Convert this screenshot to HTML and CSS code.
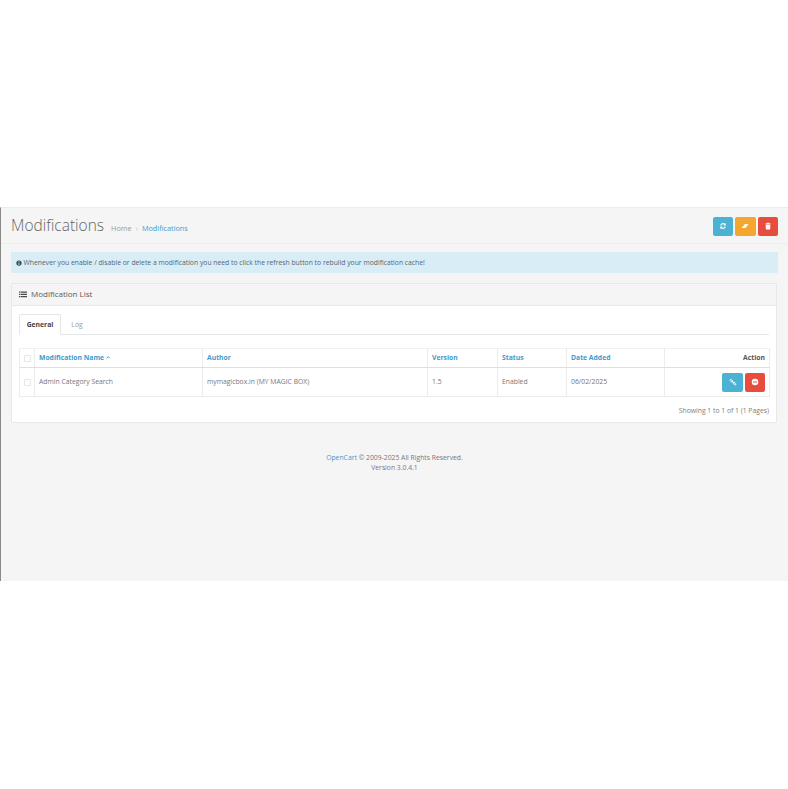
FILE: index.html
```html
<!DOCTYPE html>
<html lang="en">
<head>
<meta charset="utf-8">
<title>Modifications</title>
<link rel="stylesheet" href="styles.css">
</head>
<body>
<main class="app">
  <header class="page-header">
    <div class="heading">
      <h1>Modifications</h1>
      <nav class="crumbs"><span>Home</span><span class="sep">›</span><a href="#">Modifications</a></nav>
    </div>
    <div class="btn-row">
      <button class="btn info" aria-label="Refresh"><svg viewBox="0 0 16 16"><path d="M2.500 7a5.500 5.500 0 0 1 9.300-3.300L13.500 2v5h-5l1.800-1.800A3.400 3.400 0 0 0 4.700 7zM13.500 9a5.500 5.500 0 0 1-9.300 3.300L2.500 14V9h5l-1.800 1.800A3.400 3.400 0 0 0 11.300 9z"/></svg></button>
      <button class="btn warn" aria-label="Clear"><svg viewBox="0 0 16 16"><path d="M1 12 8 4h7L9 12z"/></svg></button>
      <button class="btn danger" aria-label="Delete"><svg viewBox="0 0 16 16"><path d="M6 1.500h4l.7 1.500H13.500v1.700h-11V3h2.800zM3.500 5.500h9v8a1.500 1.500 0 0 1-1.500 1.500H5a1.500 1.500 0 0 1-1.500-1.500z"/></svg></button>
    </div>
  </header>

  <div class="alert"><svg class="alert-icon" viewBox="0 0 16 16"><path fill-rule="evenodd" d="M8 1a7 7 0 1 1 0 14A7 7 0 0 1 8 1zM6.800 3.500v2.200h2.400V3.500zM6 7v1.500h1V11H6v1.500h4V11H9V7z"/></svg><span>Whenever you enable / disable or delete a modification you need to click the refresh button to rebuild your modification cache!</span></div>

  <section class="panel">
    <div class="panel-heading"><svg class="list-icon" viewBox="0 0 16 14"><path d="M0 1h3v2.500H0zM4 1h12v2.500H4zM0 5.500h3V8H0zM4 5.500h12V8H4zM0 10h3v2.500H0zM4 10h12v2.500H4z"/></svg><span>Modification List</span></div>
    <div class="panel-body">
      <div class="tabs">
        <a class="tab active" href="#">General</a>
        <a class="tab" href="#">Log</a>
      </div>
      <table>
        <colgroup>
          <col class="c-check"><col class="c-name"><col class="c-author"><col class="c-version"><col class="c-status"><col class="c-date"><col class="c-action">
        </colgroup>
        <thead>
          <tr>
            <th><span class="check"></span></th>
            <th><a href="#">Modification Name <svg class="caret" viewBox="0 0 10 6"><path d="M1 5l4-4 4 4"/></svg></a></th>
            <th><a href="#">Author</a></th>
            <th><a href="#">Version</a></th>
            <th><a href="#">Status</a></th>
            <th><a href="#">Date Added</a></th>
            <th class="right">Action</th>
          </tr>
        </thead>
        <tbody>
          <tr>
            <td><span class="check"></span></td>
            <td>Admin Category Search</td>
            <td>mymagicbox.in (MY MAGIC BOX)</td>
            <td>1.5</td>
            <td>Enabled</td>
            <td>06/02/2025</td>
            <td class="right">
              <div class="row-actions">
                <button class="btn info" aria-label="Link"><svg viewBox="0 0 16 16"><path class="link-stroke" d="M2.500 3.500a1.500 1.500 0 0 1 2.100-.6l2.500 2.500a1.500 1.500 0 0 1-.6 2.100 1.500 1.500 0 0 1-2.100.1L2.400 5.600a1.500 1.500 0 0 1 .1-2.100zM8.500 9a1.500 1.500 0 0 1 2.100-.6l2.900 2.900a1.500 1.500 0 0 1-.1 2.100 1.500 1.500 0 0 1-2.100.1L8.400 11.100A1.500 1.500 0 0 1 8.500 9zM5.500 5.500l5 5"/></svg></button>
                <button class="btn danger narrow" aria-label="Disable"><svg viewBox="0 0 16 16"><path fill-rule="evenodd" d="M8 1.500a6.500 6.500 0 1 1 0 13 6.500 6.500 0 0 1 0-13zM4 6.800v2.400h8V6.800z"/></svg></button>
              </div>
            </td>
          </tr>
        </tbody>
      </table>
      <p class="results">Showing 1 to 1 of 1 (1 Pages)</p>
    </div>
  </section>

  <footer class="footer"><a href="#">OpenCart</a> © 2009-2025 All Rights Reserved.<br>Version 3.0.4.1</footer>
</main>
</body>
</html>
```
FILE: styles.css
```css
* { box-sizing: border-box; }
html, body { margin: 0; padding: 0; background: #fff; }
body { padding-top: 207px; font-family: "Open Sans", sans-serif; font-size: 7px; line-height: 10px; color: #666; }
a { color: #3d9ccc; text-decoration: none; }
.app { height: 374px; background: #f5f5f5; border-top: 1px solid #ececec; border-left: 1px solid #8a8a8a; }

.page-header { height: 36px; margin-bottom: 8px; padding: 0 10px; display: flex; justify-content: space-between; align-items: center; border-bottom: 1px solid #eee; }
.heading { display: flex; align-items: baseline; gap: 7px; position: relative; top: -1px; }
h1 { margin: 0; font-size: 15.500px; line-height: 24px; font-weight: 300; color: #666; }
.crumbs { display: flex; gap: 4px; font-size: 7.300px; color: #999; }
.crumbs .sep { color: #bbb; }
.btn-row { display: flex; gap: 2px; padding-top: 1px; }
.btn { width: 21px; height: 19px; padding: 0; border: 0; border-radius: 2px; display: flex; align-items: center; justify-content: center; }
.btn-row .btn { width: 20.500px; }
.btn svg { width: 8px; height: 8px; fill: #fff; }
.info { background: #4cb2d4; }
.warn { background: #f5a62f; }
.danger { background: #e74c3c; }
.narrow { width: 20px; }
.link-stroke { fill: none; stroke: #fff; stroke-width: 2; }

.alert { margin: 0 10px 10px; height: 21px; padding: 0 5px; display: flex; align-items: center; gap: 1.500px; background: #d9edf7; border-radius: 1px; font-size: 6.800px; color: #556670; }
.alert-icon { width: 6px; height: 6px; fill: #2b4a5a; flex: none; }

.panel { margin: 0 11px 0 10px; height: 140px; background: #fff; border: 1px solid #e8e8e8; border-radius: 1px; }
.panel-heading { height: 22px; padding: 0 7px 1px; display: flex; align-items: center; gap: 4px; background: #f5f5f5; border-bottom: 1px solid #e8e8e8; font-size: 8px; color: #595959; }
.list-icon { width: 8px; height: 7px; fill: #4a4a4a; }
.panel-body { padding: 8px 7px 0; }

.tabs { height: 21px; margin-bottom: 13px; display: flex; border-bottom: 1px solid #e6e6e6; }
.tab { width: 42px; height: 21px; display: flex; align-items: center; justify-content: center; color: #999; font-size: 6.800px; }
.tab.active { background: #fff; border: 1px solid #e6e6e6; border-bottom-color: #fff; border-radius: 2px 2px 0 0; color: #444; font-weight: 700; }
.tab:not(.active) { width: 32px; }

table { width: 750px; table-layout: fixed; border-collapse: collapse; font-size: 6.800px; }
.c-check { width: 15px; }
.c-name { width: 168px; }
.c-author { width: 225px; }
.c-version { width: 70px; }
.c-status { width: 69px; }
.c-date { width: 98px; }
.c-action { width: 105px; }
th, td { padding: 0 4px; border: 1px solid #ececec; text-align: left; white-space: nowrap; overflow: hidden; }
th { height: 19px; font-weight: 700; color: #555; border-bottom: 1px solid #dfdfdf; border-top-color: #f0f0f0; }
td { height: 29px; color: #777; }
th a { color: #3d9ccc; }
.caret { width: 4.500px; height: 3px; fill: none; stroke: #3d9ccc; stroke-width: 2; vertical-align: 1px; }
.right { text-align: right; }
.check { display: block; width: 7px; height: 7px; border: 1px solid #e6e6e6; border-radius: 1px; background: #fff; }
.row-actions { display: flex; justify-content: flex-end; gap: 2px; }
.results { margin: 9px 0 0; text-align: right; color: #808080; font-size: 6.800px; }

.footer { margin-top: 30px; text-align: center; font-size: 6.800px; color: #777; }
```
